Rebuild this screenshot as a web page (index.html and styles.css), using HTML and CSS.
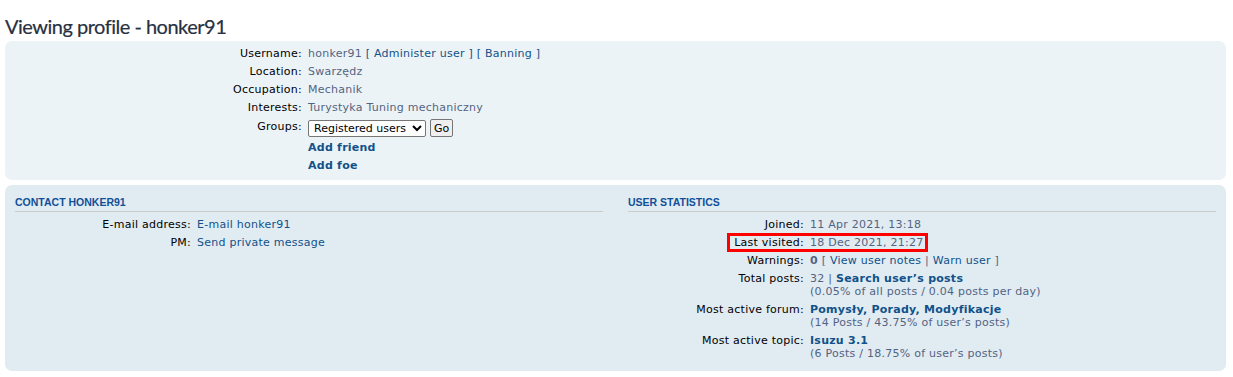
FILE: index.html
```html
<!DOCTYPE html>
<html lang="en">
<head>
<meta charset="utf-8">
<title>Viewing profile - honker91</title>
<link rel="stylesheet" href="styles.css">
</head>
<body>
<h2 class="page-title">Viewing profile - honker91</h2>

<div class="panel panel-light">
  <dl class="details details-top">
    <dt>Username:</dt>
    <dd><span class="val">honker91</span> <a href="#">[ Administer user ]</a> <a href="#">[ Banning ]</a></dd>
    <dt>Location:</dt>
    <dd>Swarzędz</dd>
    <dt>Occupation:</dt>
    <dd>Mechanik</dd>
    <dt>Interests:</dt>
    <dd>Turystyka Tuning mechaniczny</dd>
    <dt class="groups-label">Groups:</dt>
    <dd class="groups">
      <select class="group-select"><option>Registered users</option></select>
      <button class="go-btn" type="button">Go</button>
    </dd>
    <dt></dt>
    <dd><a href="#" class="strong">Add friend</a></dd>
    <dt></dt>
    <dd><a href="#" class="strong">Add foe</a></dd>
  </dl>
</div>

<div class="panel panel-dark">
  <div class="columns">
    <div class="column">
      <h3 class="col-title">Contact honker91</h3>
      <dl class="details details-col">
        <dt>E-mail address:</dt>
        <dd><a href="#">E-mail honker91</a></dd>
        <dt>PM:</dt>
        <dd><a href="#">Send private message</a></dd>
      </dl>
    </div>
    <div class="column">
      <h3 class="col-title">User statistics</h3>
      <dl class="details details-col">
        <dt>Joined:</dt>
        <dd>11 Apr 2021, 13:18</dd>
        <dt><span class="mark-left">Last visited:</span></dt>
        <dd><span class="mark-right">18 Dec 2021, 21:27</span></dd>
        <dt>Warnings:</dt>
        <dd><strong>0</strong> [ <a href="#">View user notes</a> | <a href="#">Warn user</a> ]</dd>
        <dt>Total posts:</dt>
        <dd>32 | <a href="#" class="strong">Search user’s posts</a><br>(0.05% of all posts / 0.04 posts per day)</dd>
        <dt>Most active forum:</dt>
        <dd><a href="#" class="strong">Pomysły, Porady, Modyfikacje</a><br>(14 Posts / 43.75% of user’s posts)</dd>
        <dt>Most active topic:</dt>
        <dd><a href="#" class="strong">Isuzu 3.1</a><br>(6 Posts / 18.75% of user’s posts)</dd>
      </dl>
    </div>
  </div>
</div>
</body>
</html>
```

FILE: styles.css
```css
html, body {
  margin: 0;
  padding: 0;
  background: #ffffff;
}

body {
  padding: 0 7px 0 5px;
  font-family: "DejaVu Sans", Verdana, sans-serif;
  font-size: 11px;
  letter-spacing: 0.25px;
  color: #536482;
}

a {
  color: #105289;
  text-decoration: none;
}

a.strong {
  font-weight: bold;
}

.page-title {
  margin: 14px 0 3px;
  font-family: "Lato", "Liberation Sans", sans-serif;
  font-weight: normal;
  font-size: 20px;
  line-height: 24px;
  letter-spacing: -0.5px;
  color: #28313f;
  -webkit-text-stroke: 0.2px #28313f;
}

.panel {
  border-radius: 7px;
  padding: 6px 10px 5px;
  margin-bottom: 5px;
}

.panel-light {
  background: #ecf3f7;
}

.panel-dark {
  background: #e1ebf2;
  padding-top: 5px;
  padding-bottom: 11px;
}

.details {
  display: grid;
  margin: 0;
  row-gap: 5px;
  line-height: 13px;
}

.details-top {
  grid-template-columns: 287px 1fr;
  padding-bottom: 3px;
}

.details-col {
  grid-template-columns: 176px 1fr;
}

.details dt {
  text-align: right;
  color: #000000;
  white-space: nowrap;
}

.details dd {
  margin: 0;
  padding-left: 6px;
}

.val {
  color: #536482;
}

.details .groups-label {
  margin-top: 1px;
}

.details .groups {
  display: flex;
  align-items: center;
  gap: 4px;
  margin-bottom: -1px;
}

.group-select {
  font-family: "DejaVu Sans", Verdana, sans-serif;
  font-size: 11px;
  letter-spacing: 0;
  height: 17px;
  padding: 0 0 0 1px;
  border: 1px solid #767676;
  border-radius: 2px;
  background: #ffffff;
  color: #000000;
  width: 118px;
}

.go-btn {
  font-family: "DejaVu Sans", Verdana, sans-serif;
  font-size: 11px;
  letter-spacing: 0;
  height: 18px;
  padding: 0 3px;
  border: 1px solid #767676;
  border-radius: 2px;
  background: #efefef;
  color: #000000;
}

.columns {
  display: grid;
  grid-template-columns: 1fr 1fr;
  column-gap: 25px;
}

.col-title {
  margin: 6px 0 6px;
  padding-bottom: 2px;
  border-bottom: 1px solid #cccccc;
  font-family: "Liberation Sans", Arial, sans-serif;
  font-size: 10.5px;
  letter-spacing: 0;
  line-height: 13px;
  font-weight: bold;
  text-transform: uppercase;
  color: #115098;
}

strong {
  color: #536482;
}

.mark-left {
  border: 3px solid #ff0000;
  border-right: 0;
  padding-left: 4px;
}

.mark-right {
  border: 3px solid #ff0000;
  border-left: 0;
  margin-left: -6px;
  padding-left: 6px;
  padding-right: 2px;
}
```
